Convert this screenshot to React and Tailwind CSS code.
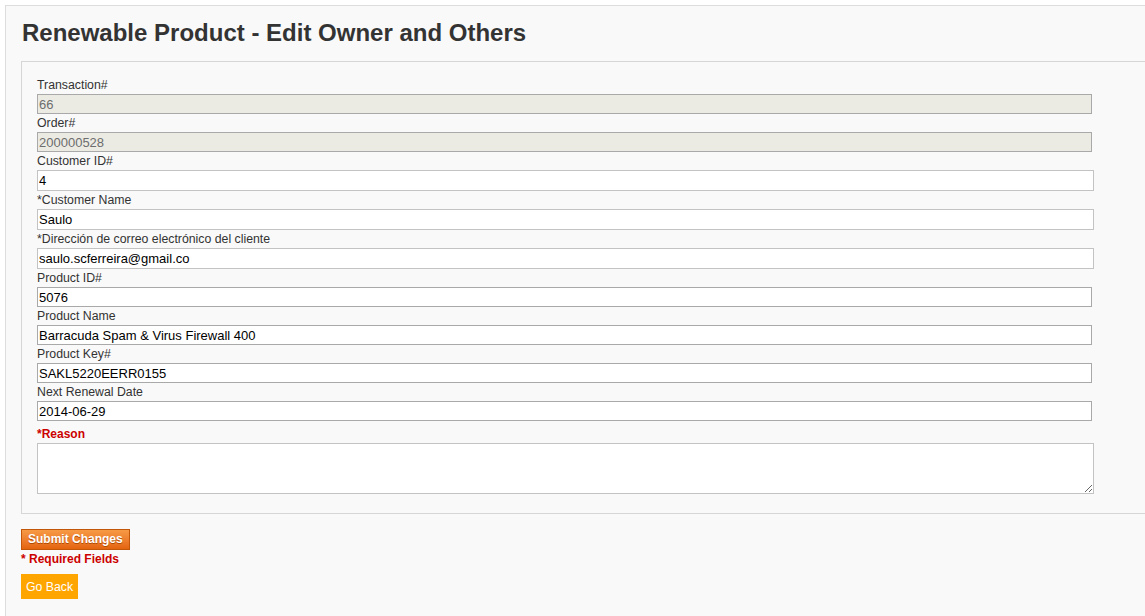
const fields = [
  { label: "Transaction#", value: "66", kind: "disabled" },
  { label: "Order#", value: "200000528", kind: "disabled" },
  { label: "Customer ID#", value: "4", kind: "light" },
  { label: "*Customer Name", value: "Saulo", kind: "light" },
  { label: "*Dirección de correo electrónico del cliente", value: "saulo.scferreira@gmail.co", kind: "light" },
  { label: "Product ID#", value: "5076", kind: "dark" },
  { label: "Product Name", value: "Barracuda Spam & Virus Firewall 400", kind: "dark" },
  { label: "Product Key#", value: "SAKL5220EERR0155", kind: "dark" },
  { label: "Next Renewal Date", value: "2014-06-29", kind: "dark" },
];

const inputClass = {
  disabled:
    "w-[1055px] h-[20px] border border-[#a9a9a9] bg-[#ebebe4] text-[#6d6d6d]",
  light: "w-[1057px] h-[21px] border border-[#c3c3c3] bg-white text-black",
  dark: "w-[1055px] h-[20px] border border-[#a9a9a9] bg-white text-black",
};

export default function App() {
  return (
    <div className="w-[1145px] h-[616px] overflow-hidden bg-white font-['Liberation_Sans',Arial,sans-serif]">
      <div className="ml-[5px] mt-[5px] w-[1180px] min-h-[700px] border border-[#dddddd] bg-[#f9f9f9] px-[15px] pt-[13px]">

        {/* Title */}
        <h1 className="ml-px text-[24px] leading-[28px] font-bold text-[#333333] mb-[14px]">
          Renewable Product - Edit Owner and Others
        </h1>

        {/* Form box */}
        <div className="w-[1150px] border border-[#d6d6d6] px-[15px] pt-[14px] pb-[19px]">
          {fields.map((f) => (
            <div key={f.label}>
              <label className="block pt-px text-[12.3px] leading-4 mb-px text-[#333333]">
                {f.label}
              </label>
              <input
                readOnly
                disabled={f.kind === "disabled"}
                value={f.value}
                className={`${inputClass[f.kind]} block px-[1px] text-[13px] outline-none`}
              />
            </div>
          ))}

          <label className="block mt-[4px] pt-px text-[12px] leading-4 mb-px font-bold text-[#cc0000]">
            *Reason
          </label>
          <textarea className="block w-[1057px] h-[51px] border border-[#c3c3c3] bg-white outline-none" />
        </div>

        {/* Actions */}
        <button className="mt-[15px] block h-[21px] px-[6px] border border-[#c2570a] bg-gradient-to-b from-[#f79a45] to-[#e4640d] text-white text-[12px] font-bold leading-[19px] [text-shadow:0_1px_0_#b04a00]">
          Submit Changes
        </button>
        <p className="mt-px text-[12px] leading-[16px] font-bold text-[#cc0000]">
          * Required Fields
        </p>
        <button className="mt-[7px] block h-[25px] px-[5px] bg-[#ffa500] text-white text-[12.3px] leading-[27px]">
          Go Back
        </button>
      </div>
    </div>
  );
}
